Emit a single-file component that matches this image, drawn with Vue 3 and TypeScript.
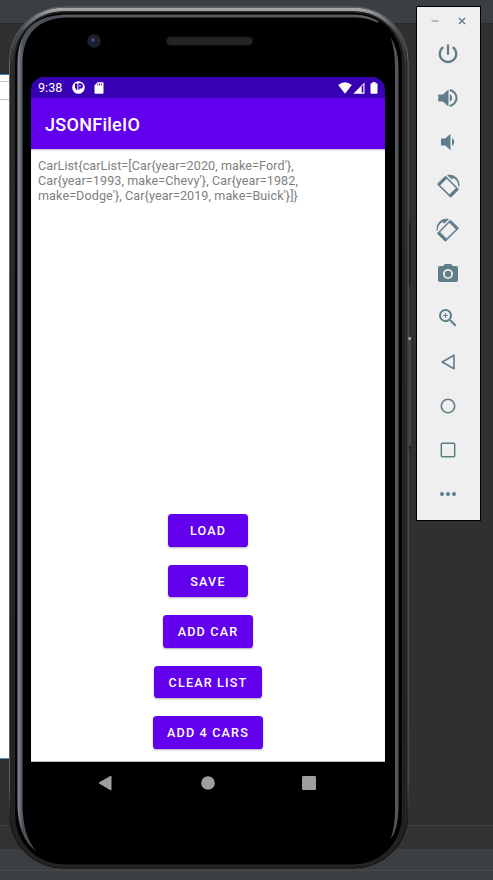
<script setup lang="ts">
interface Tool { name: string; fill?: string; line?: string; bold?: string; size: number; width?: number }

const report = "CarList{carList=[Car{year=2020, make=Ford'},\nCar{year=1993, make=Chevy'}, Car{year=1982,\nmake=Dodge'}, Car{year=2019, make=Buick'}]}"
const actions: string[] = ['Load', 'Save', 'Add car', 'Clear list', 'Add 4 cars']
const tools: Tool[] = [
  { name: 'power', size: 24, line: 'M12 2.5v10.2M7.3 5.1A8.2 8.2 0 1 0 16.7 5.1', width: 2.3 },
  { name: 'volume-up', size: 24, fill: 'M2.3 8.4v7.2h4.5l5.7 5V3.4l-5.7 5zM13.8 8a4.5 4.5 0 0 1 0 8z', line: 'M13.8 4.1a8 8 0 0 1 0 15.8', width: 2.1 },
  { name: 'volume-down', size: 24, fill: 'M5 8.5v7h4.3l5.2 4.7V3.8L9.3 8.5zM16 8a4.6 4.6 0 0 1 0 8z' },
  { name: 'rotate-left', size: 24, line: 'M2 10.2 9.7 2.8 22 15.2 14.6 22.6Z', bold: 'M2.7 10.6 10 3.5M14.2 21.9 21.3 14.9', fill: 'M11 1.2C17.5-.8 24.2 4.5 23.4 12.5h-1.1C22.3 8.5 20.5 5.6 17.5 4l-1.6 1.5z', width: 1.5 },
  { name: 'rotate-right', size: 24, line: 'M22 10.2 14.3 2.8 2 15.2 9.4 22.6Z', bold: 'M21.3 10.6 14 3.5M9.8 21.9 2.7 14.9', fill: 'M13 1.2C6.5-.8-.2 4.5.6 12.5h1.1C1.7 8.5 3.5 5.6 6.5 4l1.6 1.5z', width: 1.5 },
  { name: 'camera', size: 24, fill: 'M9 2 7.2 4H4a2 2 0 0 0-2 2v12c0 1.1.9 2 2 2h16a2 2 0 0 0 2-2V6a2 2 0 0 0-2-2h-3.2L15 2zm3 5a5 5 0 1 1 0 10 5 5 0 0 1 0-10zm0 1.8a3.2 3.2 0 1 0 0 6.4 3.2 3.2 0 0 0 0-6.4z' },
  { name: 'zoom', size: 24, fill: 'M15.5 14h-.79l-.28-.27A6.47 6.47 0 0 0 16 9.5 6.5 6.5 0 1 0 9.5 16c1.61 0 3.09-.59 4.23-1.57l.27.28v.79l5 4.99L20.49 19zm-6 0a4.5 4.5 0 1 1 0-9 4.5 4.5 0 0 1 0 9zM12 10h-2v2H9v-2H7V9h2V7h1v2h2z' },
  { name: 'back', size: 24, line: 'M6.2 12 18 5.2v13.6Z', width: 1.6 },
  { name: 'home', size: 24, line: 'M12 5.3a6.7 6.7 0 1 1 0 13.4 6.7 6.7 0 0 1 0-13.4z', width: 1.6 },
  { name: 'overview', size: 24, line: 'M6.3 5.3h11.4q1 0 1 1v11.4q0 1-1 1H6.3q-1 0-1-1V6.3q0-1 1-1z', width: 1.5 },
  { name: 'more', size: 24, fill: 'M6 10a2 2 0 1 1 0 4 2 2 0 0 1 0-4zm6 0a2 2 0 1 1 0 4 2 2 0 0 1 0-4zm6 0a2 2 0 1 1 0 4 2 2 0 0 1 0-4z' },
]
</script>

<template>
  <div class="desktop">
    <div class="ide">
      <div class="ide-top"></div>
      <div class="ide-body"><div class="editor"><i></i><i></i></div></div>
      <div class="ide-tabs"></div>
      <div class="ide-status"></div>
    </div>

    <section class="phone">
      <svg class="shell" viewBox="0 0 403 866" width="403" height="866" aria-hidden="true">
        <defs>
          <linearGradient id="rim" gradientUnits="userSpaceOnUse" x1="0" y1="0" x2="0" y2="866">
            <stop offset="0" stop-color="#b4b6b8" /><stop offset=".012" stop-color="#7c7f82" />
            <stop offset=".03" stop-color="#484a4c" /><stop offset=".07" stop-color="#2c2c2c" />
            <stop offset="1" stop-color="#222" />
          </linearGradient>
          <linearGradient id="edge" gradientUnits="userSpaceOnUse" x1="0" y1="0" x2="0" y2="866">
            <stop offset="0" stop-color="#66686a" /><stop offset=".9" stop-color="#606060" />
            <stop offset=".95" stop-color="#080808" /><stop offset="1" stop-color="#000" />
          </linearGradient>
          <linearGradient id="slate" gradientUnits="userSpaceOnUse" x1="8" y1="0" x2="14" y2="0">
            <stop offset="0" stop-color="#8c8e94" /><stop offset=".35" stop-color="#737981" />
            <stop offset="1" stop-color="#4b5159" />
          </linearGradient>
          <pattern id="mesh" width="2" height="2" patternUnits="userSpaceOnUse">
            <rect width="2" height="2" fill="#202222" /><rect width="1" height="1" fill="#2a2c2c" />
          </pattern>
        </defs>
        <path d="M398 217h4v62h-4zM398 331h4v112h-4z" fill="#202020" />
        <path d="M401 332v108" stroke="#555" stroke-width="1.4" />
        <path d="M399 331h3v3h-3z" fill="#999" />
        <rect x=".5" y="1" width="398.5" height="861" rx="54" fill="#171717" stroke="url(#edge)" />
        <rect x="3" y="3.5" width="393.5" height="856.5" rx="51.5" fill="none" stroke="url(#rim)" stroke-width="3.5" />
        <rect x="5.5" y="6" width="388" height="853" rx="49" fill="#050505" stroke="#292929" />
        <rect x="8" y="8" width="384" height="850" rx="47" fill="#000" />
        <path d="M8.5 56Q9 9 58 8.7H347Q361 9 370.5 17 359 11.8 347 11.5H58Q13.5 13 13.5 58V800Q14 831 27.5 845.5 9 832 8.5 800Z" fill="url(#slate)" />
        <path d="M52 9.7H347Q360 10.5 369 16" fill="none" stroke="#5b5a61" stroke-width="2" />
        <path d="M381.5 31Q389.5 43 389.5 62V803Q389 824 381.5 833 386 822 386 803V62Q386 43 381.5 31Z" fill="#55545c" />
        <circle cx="85" cy="35" r="6.8" fill="#202124" /><circle cx="85" cy="35" r="4" fill="#17203b" />
        <circle cx="84" cy="34" r="1.7" fill="#3e4d84" />
        <rect x="157.5" y="31" width="86" height="8" rx="4" fill="url(#mesh)" stroke="#191a1a" />
      </svg>

      <div class="screen">
        <header class="status">
          <span class="clock">9:38</span>
          <svg width="13" height="13" viewBox="0 0 13 13"><circle cx="6.5" cy="6.5" r="6.3" fill="#fff" /><path d="M3 2.6h2.3v6.2H3.9V7.3H3zM6.3 2.3h2a2.6 2.6 0 0 1 0 5.2h-.9v1.3H6.3z" fill="#3700b3" /><path d="M7.4 3.9h1.1v1.9H7.4z" fill="#fff" /></svg>
          <svg width="10" height="12" viewBox="0 0 10 12"><path d="M3.5.3h5q1 0 1 1v9.5q0 1-1 1h-7q-1 0-1-1V3.4z" fill="#fff" /><path d="M3.7 1.5v2M5.5 1.5v2M7.3 1.5v2" stroke="#3700b3" stroke-width=".8" /></svg>
          <span class="spacer"></span>
          <svg class="wifi" width="14" height="12" viewBox="0 0 14 12"><path d="M7 11.8.2 2.9Q7-2.3 13.8 2.9z" fill="#fff" /></svg>
          <svg class="cell" width="12" height="12" viewBox="0 0 12 12"><path d="M11.5.5v11.2H.3z" fill="#fff" /><path d="M8.7 4.5 10.4 2.8v7.7H8.7z" fill="#3700b3" /></svg>
          <svg width="8" height="12" viewBox="0 0 8 12"><path d="M2.5 0h3v1.2h1q1 0 1 1v8.6q0 1-1 1h-5q-1 0-1-1V2.2q0-1 1-1h1z" fill="#fff" /></svg>
        </header>
        <h1 class="appbar">JSONFileIO</h1>
        <main class="content">
          <p class="report">{{ report }}</p>
          <div class="actions">
            <button v-for="label in actions" :key="label" type="button">{{ label }}</button>
          </div>
        </main>
        <nav class="navbar">
          <svg width="14" height="16" viewBox="0 0 14 16"><path d="M13 1v14L1 8z" fill="#9e9e9e" stroke="#9e9e9e" stroke-linejoin="round" /></svg>
          <svg width="15" height="14" viewBox="0 0 15 14"><circle cx="8" cy="7" r="6.8" fill="#9e9e9e" /></svg>
          <svg width="14" height="14" viewBox="0 0 14 14"><rect width="14" height="14" rx="1.2" fill="#9e9e9e" /></svg>
        </nav>
      </div>
    </section>

    <aside class="toolbar">
      <div class="window">
        <svg width="8" height="10" viewBox="0 0 8 10"><path d="M.5 5h7" stroke="#a5b4bb" stroke-width="1.7" /></svg>
        <svg width="8" height="10" viewBox="0 0 8 10"><path d="m.9 1.9 6.2 6.2m0-6.2L.9 8.1" stroke="#607d8b" stroke-width="1.4" /></svg>
      </div>
      <div v-for="tool in tools" :key="tool.name" class="tool">
        <svg :width="tool.size" :height="tool.size" viewBox="0 0 24 24">
          <path v-if="tool.fill" :d="tool.fill" fill="#607d8b" fill-rule="evenodd" />
          <path v-if="tool.line" :d="tool.line" fill="none" stroke="#607d8b" :stroke-width="tool.width" stroke-linejoin="round" />
          <path v-if="tool.bold" :d="tool.bold" fill="none" stroke="#607d8b" stroke-width="3" />
        </svg>
      </div>
    </aside>
  </div>
</template>

<style>
body { margin: 0; overflow: hidden; }
</style>

<style scoped>
* { box-sizing: border-box; }
svg { display: block; flex: none; }
.desktop { position: relative; width: 493px; height: 880px; overflow: hidden; background: #2f3032; font-family: Roboto, "Liberation Sans", sans-serif; }
.ide { display: flex; flex-direction: column; height: 100%; }
.ide-top { height: 24px; background: #3c3f41; border-bottom: 1px solid #292a2b; }
.ide-body { flex: 1; padding-top: 50px; }
.editor { width: 10px; height: 685px; background: #fff; border-top: 1px solid #3f83be; border-bottom: 1px solid #4b91d0; }
.editor i { display: block; height: 7px; border-bottom: 1px solid #c5c5c5; }
.editor i + i { height: 18px; }
.ide-tabs { height: 24px; background: #313234; border-top: 1px solid #3b3c3e; }
.ide-status { height: 31px; background: linear-gradient(#3c3f41 21px, #4a4b4c 21px, #4a4b4c 22px, #3c3f41 22px); }
.phone { position: absolute; left: 9px; top: 6px; width: 403px; height: 866px; padding: 71px 27px 0 22px; }
.shell { position: absolute; left: 0; top: 0; }
.screen { position: relative; width: 354px; height: 727px; display: flex; flex-direction: column; border-radius: 13px 13px 0 0; overflow: hidden; }
.status { display: flex; align-items: center; height: 21px; padding: 0 7px; background: #3700b3; color: #fff; }
.clock { width: 34px; font-size: 12.6px; line-height: 21px; }
.status svg + svg { margin-left: 9px; }
.spacer { flex: 1; }
.status svg.cell { margin-left: 1px; }
.status svg.cell + svg { margin-left: 5px; }
.appbar { height: 51px; margin: 0; padding: 0 14px; background: #6200ee; color: #fff; font-size: 18px; font-weight: 500; line-height: 53px; letter-spacing: .28px; }
.content { display: flex; flex-direction: column; justify-content: space-between; height: 613px; padding: 8.5px 7px 12.2px; background: #fff; border-bottom: 1px solid #bbb; box-shadow: inset 0 2px 2px -1px #bbb; }
.report { margin: 0; color: #808080; font-size: 12.6px; line-height: 15px; white-space: pre; letter-spacing: .075px; }
.actions { display: flex; flex-direction: column; align-items: center; gap: 18.1px; }
button { min-width: 79.2px; height: 32.4px; padding: 1.6px 14.4px 0; border: 0; border-radius: 3.6px; background: #6200ee; color: #fff; font: 500 12.6px/30.8px Roboto, "Liberation Sans", sans-serif; letter-spacing: 1.17px; text-transform: uppercase; box-shadow: 0 1px 2px rgba(0, 0, 0, .32); }
.navbar { display: flex; align-items: center; justify-content: space-between; height: 42px; padding: 0 69px 0 67px; background: #000; }
.toolbar { position: absolute; left: 416px; top: 6px; width: 65px; height: 515px; border: 1px solid #000; background: #efefef; }
.window { display: flex; justify-content: space-between; padding: 9px 14px 6px; }
.tool { display: flex; align-items: center; justify-content: center; height: 44px; padding-right: 1px; }
</style>
